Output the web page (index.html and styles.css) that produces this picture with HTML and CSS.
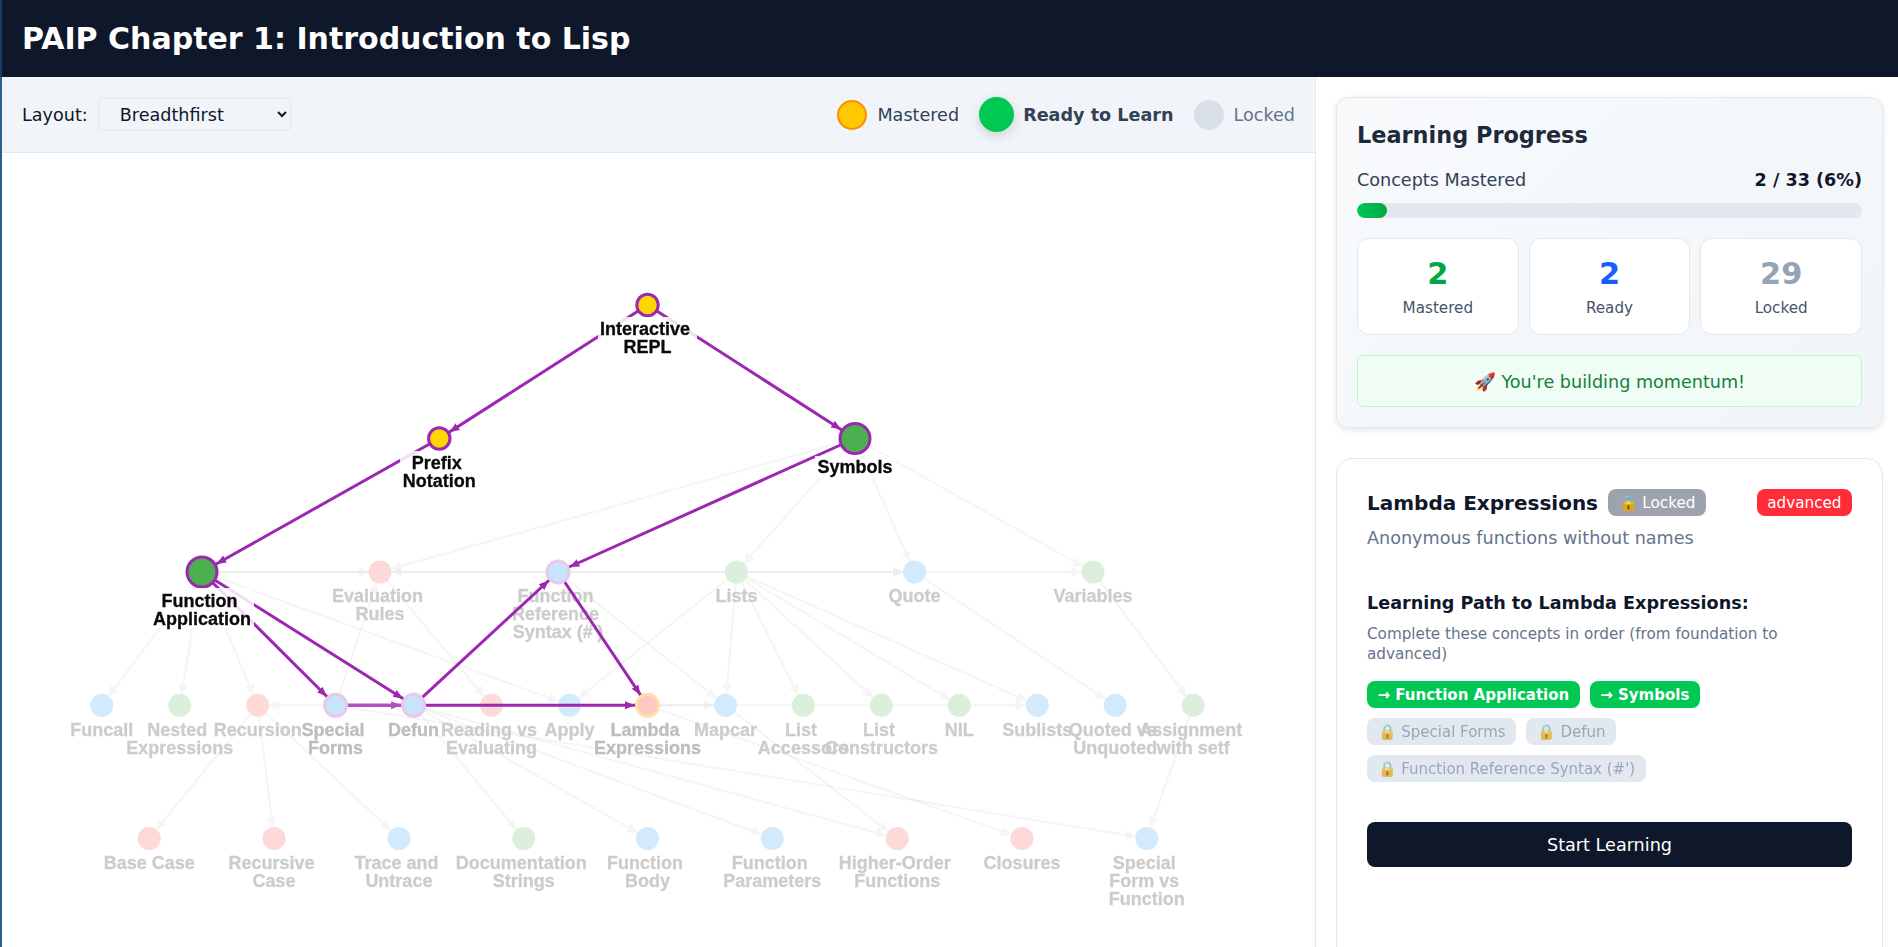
FILE: index.html
```html
<!DOCTYPE html>
<html lang="en">
<head>
<meta charset="utf-8">
<title>PAIP Chapter 1: Introduction to Lisp</title>
<link rel="stylesheet" href="styles.css">
</head>
<body>
<div class="app">
  <header class="app-header"><h1>PAIP Chapter 1: Introduction to Lisp</h1></header>
  <main class="app-main">
    <section class="graph-pane">
      <div class="toolbar">
        <label class="layout-control">Layout:
          <select class="layout-select"><option>Breadthfirst</option><option>Grid</option><option>Circle</option></select>
        </label>
        <div class="legend">
          <div class="legend-item"><span class="dot dot-mastered"></span><span>Mastered</span></div>
          <div class="legend-item legend-ready"><span class="dot dot-ready"></span><span>Ready to Learn</span></div>
          <div class="legend-item legend-locked"><span class="dot dot-locked"></span><span>Locked</span></div>
        </div>
      </div>
      <div class="graph-area">
        <svg class="graph" width="1314" height="794" viewBox="2 153 1314 794">
          <defs>
            <marker id="af" markerUnits="userSpaceOnUse" viewBox="0 0 12 12" markerWidth="12" markerHeight="12" refX="23.5" refY="6" orient="auto"><path d="M2 1 12 6 2 11z" fill="#ccc"/></marker>
            <marker id="p12" markerUnits="userSpaceOnUse" viewBox="0 0 10 10" markerWidth="10" markerHeight="10" refX="22" refY="5" orient="auto"><path d="M0 1 10 5 0 9z" fill="#9c27b0"/></marker>
            <marker id="p13" markerUnits="userSpaceOnUse" viewBox="0 0 10 10" markerWidth="10" markerHeight="10" refX="22.5" refY="5" orient="auto"><path d="M0 1 10 5 0 9z" fill="#9c27b0"/></marker>
            <marker id="p16" markerUnits="userSpaceOnUse" viewBox="0 0 10 10" markerWidth="10" markerHeight="10" refX="26.5" refY="5" orient="auto"><path d="M0 1 10 5 0 9z" fill="#9c27b0"/></marker>
          </defs>

          <g class="edges-faded">
            <line x1="855" y1="438.5" x2="380" y2="572" marker-end="url(#af)"/>
            <line x1="855" y1="438.5" x2="736.5" y2="572" marker-end="url(#af)"/>
            <line x1="855" y1="438.5" x2="914.5" y2="572" marker-end="url(#af)"/>
            <line x1="855" y1="438.5" x2="1093" y2="572" marker-end="url(#af)"/>
            <line x1="202" y1="572" x2="380" y2="572" marker-end="url(#af)"/>
            <line x1="202" y1="572" x2="914.5" y2="572" marker-end="url(#af)"/>
            <line x1="202" y1="572" x2="101.8" y2="705.3" marker-end="url(#af)"/>
            <line x1="202" y1="572" x2="179.7" y2="705.3" marker-end="url(#af)"/>
            <line x1="202" y1="572" x2="257.7" y2="705.3" marker-end="url(#af)"/>
            <line x1="202" y1="572" x2="569.5" y2="705.3" marker-end="url(#af)"/>
            <line x1="558" y1="572" x2="380" y2="572" marker-end="url(#af)"/>
            <line x1="558" y1="572" x2="914.5" y2="572" marker-end="url(#af)"/>
            <line x1="914.5" y1="572" x2="1093" y2="572" marker-end="url(#af)"/>
            <line x1="380" y1="572" x2="491.5" y2="705.3" marker-end="url(#af)"/>
            <line x1="335.6" y1="705.3" x2="380" y2="572" marker-end="url(#af)"/>
            <line x1="335.6" y1="705.3" x2="257.7" y2="705.3" marker-end="url(#af)"/>
            <line x1="558" y1="572" x2="725.5" y2="705.3" marker-end="url(#af)"/>
            <line x1="736.5" y1="572" x2="569.5" y2="705.3" marker-end="url(#af)"/>
            <line x1="736.5" y1="572" x2="725.5" y2="705.3" marker-end="url(#af)"/>
            <line x1="736.5" y1="572" x2="803.4" y2="705.3" marker-end="url(#af)"/>
            <line x1="736.5" y1="572" x2="881.4" y2="705.3" marker-end="url(#af)"/>
            <line x1="736.5" y1="572" x2="959.3" y2="705.3" marker-end="url(#af)"/>
            <line x1="736.5" y1="572" x2="1037.3" y2="705.3" marker-end="url(#af)"/>
            <line x1="914.5" y1="572" x2="1115.2" y2="705.3" marker-end="url(#af)"/>
            <line x1="1093" y1="572" x2="1193.2" y2="705.3" marker-end="url(#af)"/>
            <line x1="647.5" y1="705.3" x2="725.5" y2="705.3" marker-end="url(#af)"/>
            <line x1="647.5" y1="705.3" x2="1037.3" y2="705.3" marker-end="url(#af)"/>
            <line x1="257.7" y1="705.3" x2="149.2" y2="838.5" marker-end="url(#af)"/>
            <line x1="257.7" y1="705.3" x2="274" y2="838.5" marker-end="url(#af)"/>
            <line x1="257.7" y1="705.3" x2="398.9" y2="838.5" marker-end="url(#af)"/>
            <line x1="413.6" y1="705.3" x2="523.7" y2="838.5" marker-end="url(#af)"/>
            <line x1="413.6" y1="705.3" x2="647.5" y2="838.5" marker-end="url(#af)"/>
            <line x1="413.6" y1="705.3" x2="772.3" y2="838.5" marker-end="url(#af)"/>
            <line x1="413.6" y1="705.3" x2="897.2" y2="838.5" marker-end="url(#af)"/>
            <line x1="725.5" y1="705.3" x2="897.2" y2="838.5" marker-end="url(#af)"/>
            <line x1="647.5" y1="705.3" x2="1022" y2="838.5" marker-end="url(#af)"/>
            <line x1="335.6" y1="705.3" x2="1146.8" y2="838.5" marker-end="url(#af)"/>
            <line x1="1193.2" y1="705.3" x2="1146.8" y2="838.5" marker-end="url(#af)"/>
          </g>

          <g class="nodes-faded">
            <circle class="n-red" cx="380" cy="572" r="11.5"/>
            <circle class="n-green" cx="736.5" cy="572" r="11.5"/>
            <circle class="n-blue" cx="914.5" cy="572" r="11.5"/>
            <circle class="n-green" cx="1093" cy="572" r="11.5"/>
            <circle class="n-blue" cx="101.8" cy="705.3" r="11.5"/>
            <circle class="n-green" cx="179.7" cy="705.3" r="11.5"/>
            <circle class="n-red" cx="257.7" cy="705.3" r="11.5"/>
            <circle class="n-red" cx="491.5" cy="705.3" r="11.5"/>
            <circle class="n-blue" cx="569.5" cy="705.3" r="11.5"/>
            <circle class="n-blue" cx="725.5" cy="705.3" r="11.5"/>
            <circle class="n-green" cx="803.4" cy="705.3" r="11.5"/>
            <circle class="n-green" cx="881.4" cy="705.3" r="11.5"/>
            <circle class="n-green" cx="959.3" cy="705.3" r="11.5"/>
            <circle class="n-blue" cx="1037.3" cy="705.3" r="11.5"/>
            <circle class="n-blue" cx="1115.2" cy="705.3" r="11.5"/>
            <circle class="n-green" cx="1193.2" cy="705.3" r="11.5"/>
            <circle class="n-red" cx="149.2" cy="838.5" r="11.5"/>
            <circle class="n-red" cx="274" cy="838.5" r="11.5"/>
            <circle class="n-blue" cx="398.9" cy="838.5" r="11.5"/>
            <circle class="n-green" cx="523.7" cy="838.5" r="11.5"/>
            <circle class="n-blue" cx="647.5" cy="838.5" r="11.5"/>
            <circle class="n-blue" cx="772.3" cy="838.5" r="11.5"/>
            <circle class="n-red" cx="897.2" cy="838.5" r="11.5"/>
            <circle class="n-red" cx="1022" cy="838.5" r="11.5"/>
            <circle class="n-blue" cx="1146.8" cy="838.5" r="11.5"/>
          </g>

          <g class="labels-faded">
            <text y="602"><tspan x="377.5">Evaluation</tspan><tspan x="380" dy="18">Rules</tspan></text>
            <text y="602"><tspan x="555.5">Function</tspan><tspan x="555.5" dy="18">Reference</tspan><tspan x="558" dy="18">Syntax (#')</tspan></text>
            <text x="736.5" y="602">Lists</text>
            <text x="914.5" y="602">Quote</text>
            <text x="1093" y="602">Variables</text>
            <text x="101.8" y="736">Funcall</text>
            <text y="736"><tspan x="177.2">Nested</tspan><tspan x="179.7" dy="18">Expressions</tspan></text>
            <text x="257.7" y="736">Recursion</text>
            <text y="736"><tspan x="489">Reading vs</tspan><tspan x="491.5" dy="18">Evaluating</tspan></text>
            <text x="569.5" y="736">Apply</text>
            <text x="725.5" y="736">Mapcar</text>
            <text y="736"><tspan x="800.9">List</tspan><tspan x="803.4" dy="18">Accessors</tspan></text>
            <text y="736"><tspan x="878.9">List</tspan><tspan x="881.4" dy="18">Constructors</tspan></text>
            <text x="959.3" y="736">NIL</text>
            <text x="1037.3" y="736">Sublists</text>
            <text y="736"><tspan x="1112.7">Quoted vs</tspan><tspan x="1115.2" dy="18">Unquoted</tspan></text>
            <text y="736"><tspan x="1190.7">Assignment</tspan><tspan x="1193.2" dy="18">with setf</tspan></text>
            <text x="149.2" y="869">Base Case</text>
            <text y="869"><tspan x="271.5">Recursive</tspan><tspan x="274" dy="18">Case</tspan></text>
            <text y="869"><tspan x="396.4">Trace and</tspan><tspan x="398.9" dy="18">Untrace</tspan></text>
            <text y="869"><tspan x="521.2">Documentation</tspan><tspan x="523.7" dy="18">Strings</tspan></text>
            <text y="869"><tspan x="645">Function</tspan><tspan x="647.5" dy="18">Body</tspan></text>
            <text y="869"><tspan x="769.8">Function</tspan><tspan x="772.3" dy="18">Parameters</tspan></text>
            <text y="869"><tspan x="894.7">Higher-Order</tspan><tspan x="897.2" dy="18">Functions</tspan></text>
            <text x="1022" y="869">Closures</text>
            <text y="869"><tspan x="1144.3">Special</tspan><tspan x="1144.3" dy="18">Form vs</tspan><tspan x="1146.8" dy="18">Function</tspan></text>
          </g>
          <g class="labels-path">
            <text y="736"><tspan x="333.1">Special</tspan><tspan x="335.6" dy="18">Forms</tspan></text>
            <text x="413.6" y="736">Defun</text>
            <text y="736"><tspan x="645">Lambda</tspan><tspan x="647.5" dy="18">Expressions</tspan></text>
          </g>

          <g class="edges-path">
            <line x1="647.5" y1="305" x2="439.3" y2="438.5" marker-end="url(#p12)"/>
            <line x1="647.5" y1="305" x2="855" y2="438.5" marker-end="url(#p16)"/>
            <line x1="439.3" y1="438.5" x2="202" y2="572" marker-end="url(#p16)"/>
            <line x1="855" y1="438.5" x2="558" y2="572" marker-end="url(#p13)"/>
            <line x1="202" y1="572" x2="335.6" y2="705.3" marker-end="url(#p13)"/>
            <line x1="202" y1="572" x2="413.6" y2="705.3" marker-end="url(#p13)"/>
            <line class="edge-soft" x1="335.6" y1="705.3" x2="413.6" y2="705.3" marker-end="url(#p13)"/>
            <line x1="413.6" y1="705.3" x2="558" y2="572" marker-end="url(#p13)"/>
            <line x1="413.6" y1="705.3" x2="647.5" y2="705.3" marker-end="url(#p13)"/>
            <line x1="558" y1="572" x2="647.5" y2="705.3" marker-end="url(#p13)"/>
          </g>

          <g class="nodes-path">
            <circle class="n-ring" cx="558" cy="572" r="11"/>
            <circle class="n-ring" cx="335.6" cy="705.3" r="11"/>
            <circle class="n-ring" cx="413.6" cy="705.3" r="11"/>
            <circle class="n-lambda" cx="647.5" cy="705.3" r="11"/>
          </g>

          <g class="nodes-mastered">
            <circle class="n-gold" cx="647.5" cy="305" r="10.7"/>
            <circle class="n-gold" cx="439.3" cy="438.5" r="10.7"/>
            <circle class="n-leaf" cx="855" cy="438.5" r="15"/>
            <circle class="n-leaf" cx="202" cy="572" r="15"/>
          </g>

          <g class="label-plates">
            <rect x="598" y="317" width="99" height="40"/>
            <rect x="400" y="451" width="79" height="40"/>
            <rect x="815" y="456" width="80" height="22"/>
            <rect x="150" y="588" width="104" height="40"/>
          </g>
          <g class="labels-active">
            <text y="335"><tspan x="645">Interactive</tspan><tspan x="647.5" dy="18">REPL</tspan></text>
            <text y="469"><tspan x="436.8">Prefix</tspan><tspan x="439.3" dy="18">Notation</tspan></text>
            <text x="855" y="473">Symbols</text>
            <text y="607"><tspan x="199.5">Function</tspan><tspan x="202" dy="18">Application</tspan></text>
          </g>
        </svg>
      </div>
    </section>

    <aside class="side-panel">
      <section class="card progress-card">
        <h2 class="progress-title">Learning Progress</h2>
        <div class="progress-row"><span>Concepts Mastered</span><strong>2 / 33 (6%)</strong></div>
        <div class="progress-track"><div class="progress-fill" style="width:6%"></div></div>
        <div class="stats">
          <div class="stat"><div class="stat-value stat-mastered">2</div><div class="stat-label">Mastered</div></div>
          <div class="stat"><div class="stat-value stat-ready">2</div><div class="stat-label">Ready</div></div>
          <div class="stat"><div class="stat-value stat-locked">29</div><div class="stat-label">Locked</div></div>
        </div>
        <div class="momentum">🚀 You're building momentum!</div>
      </section>

      <section class="card concept-card">
        <div class="concept-head">
          <h3 class="concept-title">Lambda Expressions</h3>
          <span class="badge badge-locked">🔒 Locked</span>
          <span class="badge badge-level">advanced</span>
        </div>
        <p class="concept-desc">Anonymous functions without names</p>
        <h4 class="path-title">Learning Path to Lambda Expressions:</h4>
        <p class="path-note">Complete these concepts in order (from foundation to advanced)</p>
        <div class="chips">
          <span class="chip chip-ready">→ Function Application</span>
          <span class="chip chip-ready">→ Symbols</span>
          <span class="chip chip-locked"><span class="chip-inner">🔒 Special Forms</span></span>
          <span class="chip chip-locked"><span class="chip-inner">🔒 Defun</span></span>
          <span class="chip chip-locked"><span class="chip-inner">🔒 Function Reference Syntax (#')</span></span>
        </div>
        <button class="start-btn" type="button">Start Learning</button>
      </section>
    </aside>
  </main>
</div>
</body>
</html>
```

FILE: styles.css
```css
* { box-sizing: border-box; }
html, body { height: 100%; margin: 0; overflow: hidden; }
body { font-family: "DejaVu Sans", sans-serif; color: #0f172a; background: #fff; }

.app { height: 947px; display: flex; flex-direction: column; }
.app-header { height: 77px; flex: none; display: flex; align-items: center; padding: 0 20px; background: #0f172a; border-left: 2px solid #1a3d5f; }
.app-header h1 { margin: 0; font-size: 30px; font-weight: 700; color: #fff; }

.app-main { flex: 1; min-height: 0; display: flex; }

.graph-pane { width: 1316px; flex: none; display: flex; flex-direction: column; border-left: 2px solid #2b5f8d; border-right: 1px solid #e2e8f0; }
.toolbar { height: 76px; flex: none; display: flex; align-items: center; justify-content: space-between; padding: 0 20px; background: #f1f5f9; border-bottom: 1px solid #e2e8f0; }
.layout-control { display: flex; align-items: center; gap: 10px; font-size: 17.6px; color: #0f172a; }
.layout-select { width: 193px; height: 33px; padding: 0 16px 0 17px; font: inherit; color: #0f172a; background-color: #f1f5f9; border: 1px solid #e2e8f0; border-radius: 4px; }

.legend { display: flex; align-items: center; gap: 20px; font-size: 17.6px; color: #334155; }
.legend-item { display: flex; align-items: center; gap: 10px; }
.legend-ready { font-weight: 700; gap: 9px; }
.legend-locked { color: #64748b; }
.dot { display: block; width: 30px; height: 30px; border-radius: 50%; }
.dot-mastered { background: #ffc800; border: 2px solid #ff8c00; }
.dot-ready { width: 35px; height: 35px; background: #00c853; box-shadow: 0 4px 12px rgba(0, 0, 0, .15); }
.dot-locked { background: #d8dfe9; }

.graph-area { flex: 1; min-height: 0; background: #fff; overflow: hidden; }
.graph { display: block; filter: blur(.35px); }
.edges-faded line { stroke: #ccc; stroke-width: 2; opacity: .2; }
.edges-path line { stroke: #9c27b0; stroke-width: 3; }
.edges-path .edge-soft { opacity: .8; stroke-width: 3.5; }
.n-red { fill: #fdd9d7; }
.n-green { fill: #dbefdc; }
.n-blue { fill: #d3eafd; }
.n-ring { fill: #c8e4fb; stroke: #e8c9ee; stroke-width: 3; }
.n-lambda { fill: #fdc7c2; stroke: #fedfae; stroke-width: 3; }
.n-gold { fill: #ffd700; stroke: #9c27b0; stroke-width: 3; }
.n-leaf { fill: #4caf50; stroke: #9c27b0; stroke-width: 3; }
.graph text { font-family: "Liberation Sans", Arial, sans-serif; font-size: 18px; font-weight: 700; text-anchor: middle; stroke-width: .3px; }
.labels-faded text { fill: #ccc; stroke: #ccc; }
.labels-path text { fill: #bdbdbd; stroke: #bdbdbd; }
.labels-active text { fill: #0a0a0a; stroke: #0a0a0a; }
.label-plates rect { fill: #fff; opacity: .85; }

.side-panel { flex: 1; min-width: 0; padding: 20px 15px 0 20px; overflow: hidden; display: flex; flex-direction: column; gap: 30px; }
.card { flex: none; border: 1px solid #e2e8f0; }
.progress-card { height: 331px; padding: 20px; background: linear-gradient(135deg, #f8fafc, #f1f5f9); border-radius: 12px; box-shadow: 0 2px 6px rgba(0, 0, 0, .1); }
.progress-title { margin: 4px 0 0; font-size: 22.4px; line-height: 26px; font-weight: 700; color: #1e293b; }
.progress-row { display: flex; justify-content: space-between; margin-top: 22px; font-size: 17.6px; line-height: 20px; color: #334155; }
.progress-row strong { color: #0f172a; }
.progress-track { height: 15px; margin-top: 13px; background: #e2e8f0; border-radius: 8px; overflow: hidden; }
.progress-fill { height: 100%; background: linear-gradient(90deg, #00c853, #00a844); border-radius: 8px; }
.stats { display: grid; grid-template-columns: repeat(3, 1fr); gap: 10px; margin-top: 20px; }
.stat { height: 97px; padding-top: 17px; text-align: center; background: #fff; border: 1px solid #e2e8f0; border-radius: 12px; }
.stat-value { font-size: 30.4px; line-height: 36px; font-weight: 700; }
.stat-mastered { color: #00a844; }
.stat-ready { color: #1a5cff; }
.stat-locked { color: #94a3b8; }
.stat-label { margin-top: 7px; font-size: 15.2px; line-height: 18px; color: #475569; }
.momentum { height: 52px; margin-top: 20px; padding-top: 2px; display: flex; align-items: center; justify-content: center; font-size: 17.6px; color: #15803d; background: #f0fdf4; border: 1px solid #bbf7d0; border-radius: 6px; }

.concept-card { height: 600px; padding: 30px; background: #fff; border-radius: 16px; }
.concept-head { display: flex; align-items: center; gap: 10px; height: 27px; }
.concept-title { margin: 0; font-size: 20px; font-weight: 700; color: #0f172a; }
.badge { height: 27px; padding: 0 10.5px; display: flex; align-items: center; font-size: 15.2px; color: #fff; border-radius: 8px; }
.badge-locked { background: #9ca3af; }
.badge-level { margin-left: auto; background: #ff2d3a; }
.concept-desc { margin: 11px 0 0; font-size: 17.6px; line-height: 22px; color: #64748b; }
.path-title { margin: 43px 0 0; font-size: 17.6px; line-height: 22px; font-weight: 700; color: #0f172a; }
.path-note { margin: 10px 0 0; font-size: 15.2px; line-height: 20px; color: #64748b; }
.chips { display: flex; flex-wrap: wrap; gap: 10px; margin-top: 17px; }
.chip { height: 27px; padding: 0 10.5px; display: flex; align-items: center; font-size: 15px; border-radius: 8px; white-space: nowrap; }
.chip-ready { font-weight: 700; color: #fff; background: #00c853; }
.chip-locked { background: #e2e8f0; color: #7c8a9e; }
.chip-inner { opacity: .7; }
.start-btn { display: block; width: 100%; height: 45px; margin-top: 40px; font: inherit; font-size: 17.6px; color: #fff; background: #0f172a; border: 0; border-radius: 8px; }
```
